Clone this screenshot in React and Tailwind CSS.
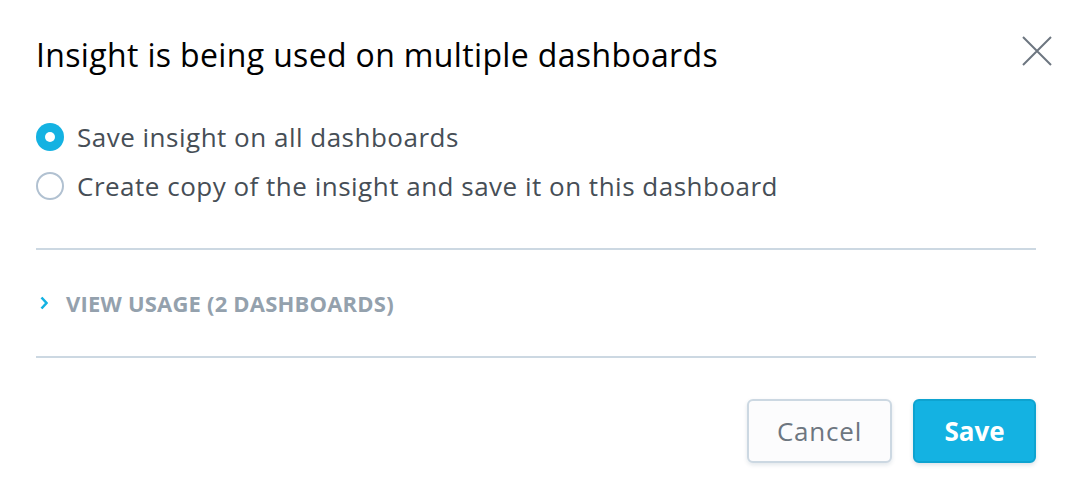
export default function App() {
  return (
    <div
      className="w-[1068px] h-[494px] bg-white pl-9 pr-8 pt-[30px]"
      style={{ fontFamily: '"Open Sans", "Noto Sans", sans-serif' }}
    >
      {/* Header */}
      <div className="flex items-start justify-between">
        <h1 className="text-[32px] leading-[50px] tracking-[0.35px] text-black">
          Insight is being used on multiple dashboards
        </h1>
        <button className="mt-[6px] -mr-4 w-[30px] h-[30px] text-[#6d7680]" aria-label="Close">
          <svg viewBox="0 0 30 30" className="w-[30px] h-[30px]" fill="none" stroke="currentColor" strokeWidth={2}>
            <path d="M1 1L29 29M29 1L1 29" />
          </svg>
        </button>
      </div>

      {/* Options */}
      <div className="mt-[43px] flex flex-col gap-[21px] text-[26px] leading-[28px] tracking-[0.5px] text-[#464e56]">
        <label className="flex items-center gap-[13px]">
          <span className="w-[28px] h-[28px] rounded-full bg-[#14b2e2] flex items-center justify-center">
            <span className="w-[10px] h-[10px] rounded-full bg-white" />
          </span>
          Save insight on all dashboards
        </label>
        <label className="flex items-center gap-[13px]">
          <span className="w-[28px] h-[28px] rounded-full border-2 border-[#b1c1d1] bg-white" />
          Create copy of the insight and save it on this dashboard
        </label>
      </div>

      <div className="mt-[48px] h-[2px] bg-[#ccd8e2]" />

      {/* View usage */}
      <div className="h-[106px] flex items-center gap-[18px]">
        <svg viewBox="0 0 8 14" className="ml-[4px] w-[8px] h-[14px]" fill="none" stroke="#14b2e2" strokeWidth={2.6}>
          <path d="M1.5 1.5L6.5 7L1.5 12.5" />
        </svg>
        <span className="text-[22px] font-bold tracking-[0.2px] text-[#94a1ad]">
          VIEW USAGE (2 DASHBOARDS)
        </span>
      </div>

      <div className="h-[2px] bg-[#ccd8e2]" />

      {/* Footer */}
      <div className="mt-[41px] flex justify-end gap-[21px]">
        <button className="w-[145px] h-[64px] rounded-[6px] border-2 border-[#ccd8e2] bg-[#fcfcfd] text-[26px] tracking-[0.8px] text-[#6d7680] shadow-[0_2px_4px_rgba(20,56,93,0.12)]">
          Cancel
        </button>
        <button className="w-[123px] h-[64px] rounded-[6px] border-2 border-[#0ea3d0] bg-[#14b2e2] text-[26px] font-bold text-white shadow-[0_2px_4px_rgba(20,56,93,0.15)]">
          Save
        </button>
      </div>
    </div>
  );
}
